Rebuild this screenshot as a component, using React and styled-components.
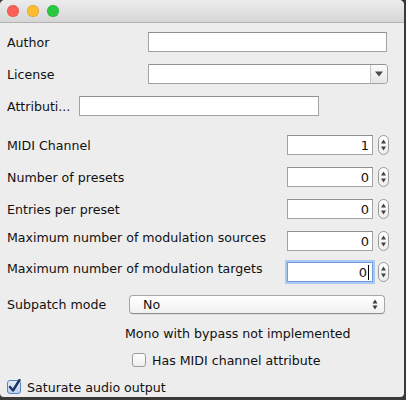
import React from 'react'
import styled, { createGlobalStyle } from 'styled-components'

const Global = createGlobalStyle`
  html, body {
    margin: 0;
    padding: 0;
    background: #3b3a38;
  }
  body {
    font-family: "DejaVu Sans", "Liberation Sans", sans-serif;
    font-size: 12.6px;
    color: #111;
  }
`

const Window = styled.div`
  width: 404px;
  height: 397px;
  background: #ededed;
  border-radius: 5px 5px 4px 4px;
  overflow: hidden;
  display: flex;
  flex-direction: column;
`

const TitleBar = styled.div`
  height: 22px;
  flex: none;
  display: flex;
  align-items: center;
  gap: 8px;
  padding-left: 7px;
  background: linear-gradient(#ececec, #d6d6d6);
  border-bottom: 1px solid #b3b3b3;
`

const Light = styled.span`
  width: 12px;
  height: 12px;
  border-radius: 50%;
  background: ${p => p.$color};
  box-shadow: inset 0 0 0 0.5px rgba(0, 0, 0, 0.18);
`

const Content = styled.div`
  padding: 0 7px;
  display: flex;
  flex-direction: column;
`

const Row = styled.div`
  display: flex;
  align-items: center;
  height: ${p => p.$h || 20}px;
  margin-top: ${p => p.$gap}px;
  padding-left: ${p => p.$indent || 0}px;
  padding-right: ${p => p.$right || 0}px;
`

const Label = styled.span`
  width: ${p => (p.$w ? `${p.$w}px` : 'auto')};
  flex: ${p => (p.$w ? 'none' : '1')};
  margin-bottom: ${p => (p.$lift ? 8 : 0)}px;
  white-space: nowrap;
`

const TextField = styled.div`
  width: ${p => p.$w}px;
  height: 20px;
  box-sizing: border-box;
  background: #fff;
  border: 1px solid #a3a3a3;
  border-top-color: #8f8f8f;
`

const Combo = styled.div`
  width: ${p => p.$w}px;
  height: 20px;
  box-sizing: border-box;
  display: flex;
  justify-content: flex-end;
  background: #fff;
  border: 1px solid #a3a3a3;
  border-top-color: #919191;
  border-radius: 0 4px 4px 0;
  overflow: hidden;
`

const ComboArrow = styled.div`
  width: 16px;
  display: flex;
  align-items: center;
  justify-content: center;
  background: linear-gradient(#fbfbfb, #e6e6e6);
  border-left: 1px solid #c4c4c4;
`

const NumberField = styled.div`
  width: 86px;
  height: 20px;
  box-sizing: border-box;
  display: flex;
  align-items: center;
  justify-content: flex-end;
  padding-right: 3px;
  background: #fff;
  border: 1px solid ${p => (p.$focus ? '#6f9bd8' : '#a3a3a3')};
  border-top-color: ${p => (p.$focus ? '#6f9bd8' : '#8f8f8f')};
  box-shadow: ${p => (p.$focus ? '0 0 0 2px #a9c9f2' : 'none')};
  font-size: 13px;
`

const Caret = styled.span`
  width: 1px;
  height: 15px;
  background: #000;
  margin-left: 1px;
`

const Spinner = styled.svg`
  margin-left: 5px;
  flex: none;
`

const Popup = styled.div`
  width: 256px;
  height: 19px;
  box-sizing: border-box;
  margin-left: 7px;
  display: flex;
  align-items: center;
  justify-content: space-between;
  padding: 0 6px 0 13px;
  border: 1px solid #a6a6a6;
  border-bottom-color: #8d8d8d;
  border-radius: 4px;
  background: linear-gradient(#ffffff, #f1f1f1);
  box-shadow: 0 1px 0 rgba(0, 0, 0, 0.06);
`

const Note = styled.div`
  height: 16px;
  margin-top: 11px;
  padding-left: 118px;
  display: flex;
  align-items: center;
`

const CheckRow = styled.label`
  display: flex;
  align-items: center;
  gap: 6px;
  height: 18px;
  margin-top: ${p => p.$gap}px;
  padding-left: ${p => p.$indent || 0}px;
`

const Box = styled.span`
  width: 14px;
  height: 14px;
  box-sizing: border-box;
  border-radius: 3px;
  display: flex;
  align-items: center;
  justify-content: center;
  overflow: visible;
  border: 1px solid ${p => (p.$on ? '#5d83bd' : '#9c9c9c')};
  background: ${p =>
    p.$on ? 'linear-gradient(#e4eefb, #b9d0f0)' : 'linear-gradient(#ffffff, #eeeeee)'};
`

const Tick = styled.svg`
  flex: none;
  margin-top: -3px;
  margin-left: 1px;
`

function SpinIcon() {
  return (
    <Spinner width="11" height="20" viewBox="0 0 11 20">
      <defs>
        <linearGradient id="sp" x1="0" y1="0" x2="0" y2="1">
          <stop offset="0" stopColor="#ffffff" />
          <stop offset="1" stopColor="#ececec" />
        </linearGradient>
      </defs>
      <rect x="0.5" y="0.5" width="10" height="19" rx="5" fill="url(#sp)" stroke="#9a9a9a" />
      <path d="M3 8.5 L5.5 4.5 L8 8.5 Z" fill="#444" />
      <path d="M3 11.5 L5.5 15.5 L8 11.5 Z" fill="#444" />
    </Spinner>
  )
}

function NumberRow({ label, value, gap, lift, focus }) {
  return (
    <Row $gap={gap} $right={8}>
      <Label $lift={lift}>{label}</Label>
      <NumberField $focus={focus}>
        {value}
        {focus && <Caret />}
      </NumberField>
      <SpinIcon />
    </Row>
  )
}

export default function App() {
  return (
    <>
      <Global />
      <Window>
        <TitleBar>
          <Light $color="#fc5f57" />
          <Light $color="#fdbc2e" />
          <Light $color="#28c840" />
        </TitleBar>
        <Content>
          <Row $gap={9}>
            <Label $w={141}>Author</Label>
            <TextField $w={239} />
          </Row>
          <Row $gap={12}>
            <Label $w={141}>License</Label>
            <Combo $w={240}>
              <ComboArrow>
                <svg width="8" height="6" viewBox="0 0 8 6">
                  <path d="M0 0.5 L8 0.5 L4 5.5 Z" fill="#4a4a4a" />
                </svg>
              </ComboArrow>
            </Combo>
          </Row>
          <Row $gap={12}>
            <Label $w={72}>Attributi...</Label>
            <TextField $w={240} />
          </Row>

          <NumberRow label="MIDI Channel" value="1" gap={19} />
          <NumberRow label="Number of presets" value="0" gap={12} />
          <NumberRow label="Entries per preset" value="0" gap={12} />
          <NumberRow label="Maximum number of modulation sources" value="0" gap={12} lift />
          <NumberRow label="Maximum number of modulation targets" value="0" gap={11} lift focus />

          <Row $gap={13} $h={19}>
            <Label $w={115}>Subpatch mode</Label>
            <Popup>
              <span>No</span>
              <svg width="6" height="11" viewBox="0 0 6 11">
                <path d="M0.5 4.5 L3 0.5 L5.5 4.5 Z" fill="#3a3a3a" />
                <path d="M0.5 6.5 L3 10.5 L5.5 6.5 Z" fill="#3a3a3a" />
              </svg>
            </Popup>
          </Row>

          <Note>Mono with bypass not implemented</Note>

          <CheckRow $gap={10} $indent={125}>
            <Box />
            Has MIDI channel attribute
          </CheckRow>
          <CheckRow $gap={9}>
            <Box $on>
              <Tick width="13" height="14" viewBox="0 0 13 14">
                <path
                  d="M2 8 L5 11.5 L11.5 1"
                  fill="none"
                  stroke="#1d3763"
                  strokeWidth="2.4"
                  strokeLinecap="round"
                  strokeLinejoin="round"
                />
              </Tick>
            </Box>
            Saturate audio output
          </CheckRow>
        </Content>
      </Window>
    </>
  )
}
